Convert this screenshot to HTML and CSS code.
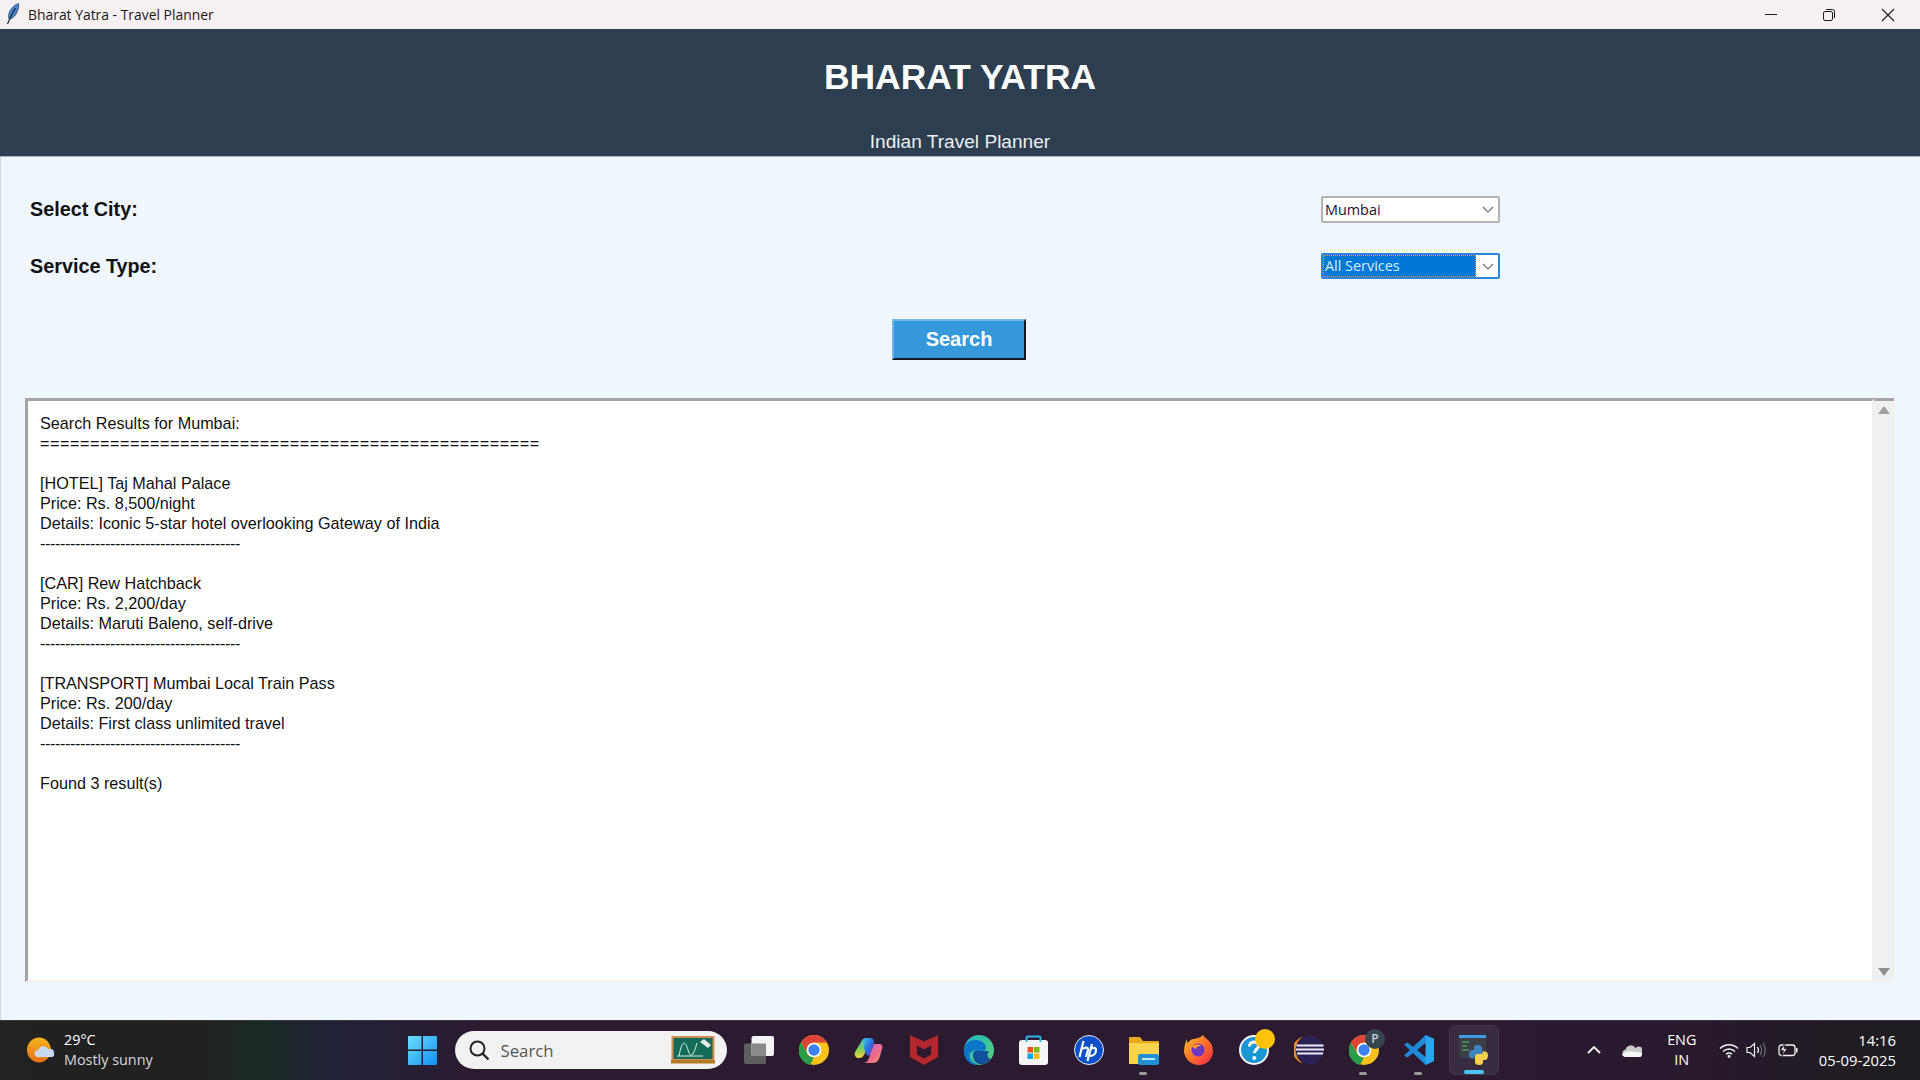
FILE: index.html
```html
<!DOCTYPE html>
<html lang="en">
<head>
<meta charset="utf-8">
<title>Bharat Yatra - Travel Planner</title>
<link rel="stylesheet" href="styles.css">
</head>
<body>
<div class="window">
  <div class="titlebar">
    <svg class="feather" width="14" height="22" viewBox="0 0 14 22"><path d="M12.500 .5C8 2 4 6 2.800 11c-.4 2-.2 4 .4 5.500C7 15.500 10 12 11.500 8c1-2.700 1.500-5 1-7.500z" fill="#4a86d0" stroke="#2a3a50" stroke-width=".7"/><path d="M9.500 5C7 9 4.500 14 1.500 21" fill="none" stroke="#1b2430" stroke-width="1.200"/></svg>
    <span class="title-text">Bharat Yatra - Travel Planner</span>
    <div class="controls">
      <div class="ctrl"><svg width="14" height="14" viewBox="0 0 14 14"><path d="M1 6.500h12" stroke="#1a1a1a" stroke-width="1"/></svg></div>
      <div class="ctrl"><svg width="14" height="14" viewBox="0 0 14 14"><rect x="1.500" y="3.500" width="9" height="9" rx="1.600" fill="none" stroke="#1a1a1a"/><path d="M4 1.500h6.500a2 2 0 0 1 2 2V10" fill="none" stroke="#1a1a1a"/></svg></div>
      <div class="ctrl"><svg width="14" height="14" viewBox="0 0 14 14"><path d="M1 1l12 12M13 1L1 13" stroke="#1a1a1a" stroke-width="1.100"/></svg></div>
    </div>
  </div>

  <header class="banner">
    <h1 class="brand">BHARAT YATRA</h1>
    <p class="tagline">Indian Travel Planner</p>
  </header>

  <main class="content">
    <div class="form">
      <label class="field-label">Select City:</label>
      <div class="combo">
        <span class="combo-value">Mumbai</span>
        <svg class="chev" width="12" height="7" viewBox="0 0 12 7"><path d="M1 1l5 5 5-5" fill="none" stroke="#707070" stroke-width="1.100"/></svg>
      </div>
      <label class="field-label">Service Type:</label>
      <div class="combo combo-focus">
        <span class="combo-value combo-selected">All Services</span>
        <svg class="chev" width="12" height="7" viewBox="0 0 12 7"><path d="M1 1l5 5 5-5" fill="none" stroke="#707070" stroke-width="1.100"/></svg>
      </div>
    </div>
    <div class="action"><button class="search-btn">Search</button></div>
    <section class="results-box">
<pre class="results">Search Results for Mumbai:
<span class="rule-eq">==================================================</span>

[HOTEL] Taj Mahal Palace
Price: Rs. 8,500/night
Details: Iconic 5-star hotel overlooking Gateway of India
<span class="rule-dash">----------------------------------------</span>

[CAR] Rew Hatchback
Price: Rs. 2,200/day
Details: Maruti Baleno, self-drive
<span class="rule-dash">----------------------------------------</span>

[TRANSPORT] Mumbai Local Train Pass
Price: Rs. 200/day
Details: First class unlimited travel
<span class="rule-dash">----------------------------------------</span>

Found 3 result(s)</pre>
      <div class="scrollbar">
        <svg width="12" height="8" viewBox="0 0 12 8"><path d="M6 0l6 8H0z" fill="#a0a0a0"/></svg>
        <svg width="12" height="8" viewBox="0 0 12 8"><path d="M6 8l6-8H0z" fill="#8f8f8f"/></svg>
      </div>
    </section>
  </main>

  <footer class="taskbar">
    <div class="weather">
      <svg width="28" height="26" viewBox="0 0 28 26"><defs><linearGradient id="sun" x1="0" y1="0" x2="0" y2="1"><stop offset="0" stop-color="#f3b51c"/><stop offset="1" stop-color="#e9701a"/></linearGradient></defs><ellipse cx="12" cy="13" rx="12" ry="12.500" fill="url(#sun)"/><path d="M11 20a3.500 3.500 0 0 1 .5-7 5 5 0 0 1 9.500-.5 3.800 3.800 0 0 1 6 3.700 3.200 3.200 0 0 1-1.500 3.800z" fill="#c6d8f5"/></svg>
      <div class="weather-text"><span class="temp">29°C</span><span class="cond">Mostly sunny</span></div>
    </div>
    <div class="task"><svg width="29" height="29" viewBox="0 0 29 29"><defs><linearGradient id="win" x1="0" y1="0" x2="1" y2="1"><stop offset="0" stop-color="#6ee0ff"/><stop offset="1" stop-color="#0f8ff0"/></linearGradient></defs><path d="M0 1a1 1 0 0 1 1-1h12.500v13.500H0zM15 0h13a1 1 0 0 1 1 1v12.500H15zM0 15h13.500v14H1a1 1 0 0 1-1-1zM15 15h14v13a1 1 0 0 1-1 1H15z" fill="url(#win)"/></svg></div>
    <div class="searchbox">
      <svg width="22" height="22" viewBox="0 0 22 22"><circle cx="9.500" cy="9.500" r="7" fill="none" stroke="#222" stroke-width="2"/><path d="M14.500 14.500l6 6" stroke="#222" stroke-width="2.400"/></svg>
      <span class="search-word">Search</span>
      <svg class="search-art" width="44" height="28" viewBox="0 0 44 28"><rect x="1.500" y="1" width="41" height="23" fill="#136b58" stroke="#d28e55" stroke-width="2"/><rect y="24" width="44" height="3.500" fill="#b07a22"/><path d="M6 20h26M8 20C11 4 14 4 17 14s6 4 9-7" fill="none" stroke="#d8efe6" stroke-width="1"/><path d="M29 6l4-3 7 6-3 3z" fill="#e8e8e8"/></svg>
    </div>
    <div class="task task-first"><svg width="30" height="28" viewBox="0 0 30 28"><rect y="7.500" width="22" height="20.500" rx="2" fill="#5e5e5e"/><rect x="7.500" y="0" width="22.500" height="20" rx="2" fill="#f4f4f4"/><rect x="7.500" y="7.500" width="14.500" height="12.500" fill="#8a8a8a"/></svg></div>
    <div class="task"><svg width="30" height="30" viewBox="0 0 30 30"><circle cx="15" cy="15" r="15" fill="#f9c11c"/><path d="M15 0A15 15 0 0 1 28 7.500H15a7.500 7.500 0 0 0-6.500 11.200L2 7.500A15 15 0 0 1 15 0z" fill="#dc4437"/><path d="M2 7.500l6.500 11.200A7.500 7.500 0 0 0 15 22.500L11 30A15 15 0 0 1 2 7.500z" fill="#2a9d4a"/><circle cx="15" cy="15" r="7.300" fill="#fff"/><circle cx="15" cy="15" r="5.700" fill="#3b82f0"/></svg></div>
    <div class="task"><svg width="29" height="27" viewBox="0 0 29 27"><defs><linearGradient id="cop1" x1="0" y1="0" x2="1" y2="1"><stop offset="0" stop-color="#36c0e8"/><stop offset=".5" stop-color="#2d6fe0"/><stop offset="1" stop-color="#6d3fd0"/></linearGradient><linearGradient id="cop2" x1="0" y1="0" x2="1" y2="1"><stop offset="0" stop-color="#b56bdc"/><stop offset=".6" stop-color="#ef6b8a"/><stop offset="1" stop-color="#f7a15a"/></linearGradient><linearGradient id="cop3" x1="0" y1="0" x2="0" y2="1"><stop offset="0" stop-color="#2fb8e0"/><stop offset=".6" stop-color="#8ccf52"/><stop offset="1" stop-color="#f7d23f"/></linearGradient></defs><path d="M7 5c1-3 3-4 5-4h3l-4 15c-1 3-3 5-6 5-3 0-5-2-4-6z" fill="url(#cop3)"/><path d="M11 1h5c3 0 4 2 4 4l-3 12c-1 2-4 2-5 0L10 11z" fill="url(#cop1)"/><path d="M20 7h5c3 0 4 2 3 5l-2 7c-1 4-3 7-7 7H9c3 0 5-2 6-5z" fill="url(#cop2)"/></svg></div>
    <div class="task"><svg width="28" height="30" viewBox="0 0 28 30"><path fill-rule="evenodd" d="M0 0l14 6.500L28 0v22l-14 8-14-8zM7 10.500v9l7 4 7-4v-9l-7 4z" fill="#b4282d"/></svg></div>
    <div class="task"><svg width="30" height="30" viewBox="0 0 30 30"><defs><linearGradient id="edge1" x1="0" y1="0" x2="1" y2="1"><stop offset="0" stop-color="#1fb5c9"/><stop offset="1" stop-color="#5bd36a"/></linearGradient></defs><circle cx="15" cy="15" r="15" fill="url(#edge1)"/><path d="M0 16C0 8 6 5 12 5c6 0 10 4 10 8 0 2-2 3-5 3-7-3-13 1-11 7 1 3 4 6 9 6.800C7 31 0 25 0 16z" fill="#0c77c8"/><path d="M9 20c0-4 3-6 7-4h9c-3 4-1 8 2 8-3 4-8 6-12 5-4-1-6-5-6-9z" fill="#134f9c"/></svg></div>
    <div class="task"><svg width="29" height="30" viewBox="0 0 29 30"><rect y="5" width="29" height="25" rx="3" fill="#f5f5f5"/><path d="M7.500 7V2.500a1 1 0 0 1 1-1h12a1 1 0 0 1 1 1V7" fill="none" stroke="#29b6e8" stroke-width="2"/><rect x="8.500" y="12" width="5.500" height="5.500" fill="#f25022"/><rect x="15" y="12" width="5.500" height="5.500" fill="#7fba00"/><rect x="8.500" y="18.500" width="5.500" height="5.500" fill="#00a4ef"/><rect x="15" y="18.500" width="5.500" height="5.500" fill="#ffb900"/></svg></div>
    <div class="task"><svg width="30" height="30" viewBox="0 0 30 30"><circle cx="15" cy="15" r="14.500" fill="#0b50c8" stroke="#e8eefc" stroke-width="1"/><path d="M9.500 6L5.500 22M9 14c2-2 5-2 5 .5L12 22M18 9l-4.500 17M16.500 14c2-1.500 5.500-2 5.500 1 0 3-2 6-6 6" fill="none" stroke="#fff" stroke-width="2.200"/></svg></div>
    <div class="task task-run"><svg width="30" height="30" viewBox="0 0 30 30"><path d="M0 3a1 1 0 0 1 1-1h10l3 4h15a1 1 0 0 1 1 1v22H0z" fill="#e9a91f"/><rect y="8" width="30" height="21" fill="#fbd44e"/><rect x="9" y="19" width="21" height="11" rx="2" fill="#1f8fd6"/><rect x="13" y="23" width="13" height="2" fill="#bfe6fb"/></svg></div>
    <div class="task"><svg width="29" height="30" viewBox="0 0 29 30"><defs><linearGradient id="ff" x1="0" y1="0" x2="1" y2="1"><stop offset="0" stop-color="#ffc12b"/><stop offset=".55" stop-color="#ff6a2b"/><stop offset="1" stop-color="#e8264f"/></linearGradient></defs><path d="M3 4c0 2 0 3 1 4 1-2 3-4 6-4 5-1 7-2 9-4 1 2 3 3 5 5 3 3 5 6 5 11 0 8-6 14-14 14S1 24 0 17C0 12 1 8 3 4z" fill="url(#ff)"/><circle cx="14" cy="15" r="6.500" fill="#6b36c4"/><path d="M8 12c3-3 7-3 9-1-3 0-5 1-5 3z" fill="#ff9d2b"/></svg></div>
    <div class="task task-badged">
      <svg width="30" height="30" viewBox="0 0 30 30"><circle cx="15" cy="15" r="14" fill="#1a96d5" stroke="#f2f8fc" stroke-width="2"/><path d="M10.500 11.500c0-3 2-4.500 4.500-4.500s4.500 1.500 4.500 4c0 3-4 3.500-4 7" fill="none" stroke="#fff" stroke-width="3"/><circle cx="15.300" cy="23" r="2" fill="#fff"/></svg>
      <span class="badge badge-dot"></span>
    </div>
    <div class="task"><svg width="30" height="30" viewBox="0 0 30 30"><circle cx="16" cy="15" r="14" fill="#2c2255"/><path d="M9 1.500A14 14 0 0 0 9 28.500 16 16 0 0 1 9 1.500z" fill="#f4901e"/><path d="M2.500 10.500h27M2 14.500h28M3 18.500h26" stroke="#efeaf7" stroke-width="2"/></svg></div>
    <div class="task task-run task-badged">
      <svg width="30" height="30" viewBox="0 0 30 30"><circle cx="15" cy="15" r="15" fill="#f9c11c"/><path d="M15 0A15 15 0 0 1 28 7.500H15a7.500 7.500 0 0 0-6.500 11.200L2 7.500A15 15 0 0 1 15 0z" fill="#dc4437"/><path d="M2 7.500l6.500 11.200A7.500 7.500 0 0 0 15 22.500L11 30A15 15 0 0 1 2 7.500z" fill="#2a9d4a"/><circle cx="15" cy="15" r="7.300" fill="#fff"/><circle cx="15" cy="15" r="5.700" fill="#3b82f0"/></svg>
      <span class="badge badge-p">P</span>
    </div>
    <div class="task task-run"><svg width="30" height="30" viewBox="0 0 30 30"><path d="M21.500 0L30 4v22l-8.500 4L9 18l-5.500 4.500L0 20.500 6 15 0 9.500 3.500 7.500 9 12z" fill="#1f8ad6"/><path d="M21.500 0L30 4v22l-8.500 4z" fill="#2aa6ee"/><path d="M21.500 8L13 15l8.500 7z" fill="#2a1a30"/></svg></div>
    <div class="task task-active">
      <svg width="30" height="30" viewBox="0 0 30 30"><rect x="0" y="0" width="27" height="23" fill="#3b4048"/><rect width="27" height="3" fill="#3f9be8"/><path d="M3 7h7M3 11h5M3 15h7" stroke="#5ec05e" stroke-width="1"/><path d="M19 10c-3 0-4 1-4 3v2h-1.500C11 15 10 17 10 19.500s1.200 4 3 4h2.500V21h5c1.500 0 2.500-1 2.500-2.500V13c0-2-1.500-3-4-3z" fill="#3f84bf"/><path d="M20 30c3 0 4-1 4-3v-2h1.500c2.500 0 3.500-2 3.500-4.500s-1.200-4-3-4h-2.500V19h-5c-1.500 0-2.500 1-2.500 2.500V27c0 2 1.500 3 4 3z" fill="#f5d24a"/></svg>
    </div>
    <div class="tray">
      <svg class="tray-chevron" width="14" height="8" viewBox="0 0 14 8"><path d="M1 7l6-6 6 6" fill="none" stroke="#f2f2f2" stroke-width="1.800"/></svg>
      <svg class="tray-cloud" width="20" height="13" viewBox="0 0 20 13"><path d="M4 13a3.800 3.800 0 0 1-.5-7.500A5.500 5.500 0 0 1 13.500 4 4.300 4.300 0 0 1 20 10c0 1.500-1 3-2 3z" fill="#c9c9c9"/><path d="M0 10.500c2-3 6-4 10-3 3 1 6 0 10 1.500 0 2-1 4-2 4H4c-2 0-3.500-1-4-2.500z" fill="#f5f5f5"/></svg>
      <div class="lang"><span>ENG</span><span>IN</span></div>
      <svg class="tray-wifi" width="20" height="15" viewBox="0 0 20 15"><path d="M1 5.500c5-5 13-5 18 0M4 8.500c3.500-3.300 8.500-3.300 12 0M7 11.200c1.800-1.500 4.200-1.500 6 0" fill="none" stroke="#f2f2f2" stroke-width="1.400"/><circle cx="10" cy="13.500" r="1.400" fill="#f2f2f2"/></svg>
      <svg class="tray-vol" width="20" height="16" viewBox="0 0 20 16"><path d="M1 5.500h3L8.500 1.500v13L4 10.500H1z" fill="none" stroke="#f2f2f2" stroke-width="1.200"/><path d="M11.500 5c1.200 1.800 1.200 4.200 0 6" fill="none" stroke="#f2f2f2" stroke-width="1.200"/><path d="M14 3c2 3 2 7 0 10M17 1c3 4 3 10 0 14" fill="none" stroke="#777" stroke-width="1.100"/></svg>
      <svg class="tray-batt" width="20" height="14" viewBox="0 0 20 14"><rect x="1" y="2" width="16" height="10.500" rx="2.500" fill="none" stroke="#f2f2f2" stroke-width="1.300"/><rect x="18" y="5" width="1.500" height="4.500" fill="#f2f2f2"/><path d="M7 0L2.500 7.500h3L4 13l5-7.500H6z" fill="#f2f2f2" stroke="#281a2c" stroke-width=".8"/></svg>
      <div class="clock"><span>14:16</span><span>05-09-2025</span></div>
    </div>
  </footer>
</div>
</body>
</html>
```
FILE: styles.css
```css
* { box-sizing: border-box; }
html, body { margin: 0; padding: 0; }
body { width: 1920px; height: 1080px; overflow: hidden; font-family: "Liberation Sans", Arial, sans-serif; }
.window { display: flex; flex-direction: column; height: 1080px; }

/* title bar */
.titlebar { flex: 0 0 29px; background: #f6f0f2; display: flex; align-items: center; padding-left: 6px; }
.feather { flex: none; margin-top: -1px; }
.title-text { margin-left: 8px; font-family: "Open Sans", sans-serif; font-size: 13.900px; color: #1a1a1a; }
.controls { margin-left: auto; display: flex; padding-right: 3px; }
.ctrl { width: 58.500px; height: 29px; display: flex; align-items: center; justify-content: center; }

/* banner */
.banner { flex: 0 0 128px; background: #2c3e50; border-bottom: 1px solid #a9b4bf; display: flex; flex-direction: column; align-items: center; }
.brand { margin: 28px 0 0; font-size: 35.400px; line-height: 40px; font-weight: 700; color: #fff; }
.tagline { margin: 33px 0 0; font-size: 19.100px; line-height: 24px; color: #ecf0f1; }

/* main */
.content { flex: 1; min-height: 0; background: #eff6fe; border-left: 1px solid #cfd6dd; display: flex; flex-direction: column; padding: 39px 26px 0 24px; }
.form { display: grid; grid-template-columns: 1291px 179px; grid-template-rows: 27px 26px; row-gap: 30px; padding-left: 5px; align-items: center; }
.field-label { font-size: 19.800px; font-weight: 700; color: #111; }
.combo { height: 100%; background: #fff; border: 2px solid #b3b3b3; border-radius: 2px; display: flex; align-items: center; justify-content: space-between; padding: 0 3px 0 0; }
.combo-focus { border-color: #2a86d8; }
.combo-value { font-family: "Open Sans", sans-serif; font-size: 14.400px; color: #1a1030; padding-left: 2px; line-height: 20px; }
.combo-selected { background: #0078d7; color: #d8ecff; flex: 0 0 153px; height: 22px; line-height: 22px; outline: 1px dotted #e09a4a; outline-offset: -1px; }
.chev { flex: none; margin-right: 1px; }
.action { display: flex; justify-content: center; margin-top: 40px; padding-right: 1px; }
.search-btn { width: 134px; height: 41px; background: #3498db; color: #fff; font-family: "Liberation Sans", sans-serif; font-size: 20px; font-weight: 700; padding: 0; border: 2px solid; border-color: #72b8ea #141a20 #141a20 #72b8ea; }

/* results */
.results-box { margin-top: 38px; height: 584px; display: flex; }
.results { flex: 1; margin: 0; padding: 12px 12px; background: #fff; border-style: solid; border-width: 3px 2px 2px 3px; border-color: #a3a3a3 #f0f0f0 #f0f0f0 #a3a3a3; font-family: "Liberation Sans", sans-serif; font-size: 16.200px; line-height: 20px; color: #111; }
.rule-eq { letter-spacing: .54px; }
.rule-dash { letter-spacing: -.39px; }
.scrollbar { flex: 0 0 20px; background: #f0f0f0; border-top: 3px solid #a3a3a3; display: flex; flex-direction: column; justify-content: space-between; align-items: center; padding: 5px 0 6px; }

/* taskbar */
.taskbar { flex: 0 0 60px; display: flex; align-items: center; color: #fff; font-family: "Open Sans", sans-serif; background: linear-gradient(90deg, #222 0, #211f20 180px, #1c2a25 260px, #22223a 340px, #2b1a30 480px, #2b1a30 1500px, #28192d 1700px, #201c22 1860px, #1f1d21 1920px); box-shadow: inset 0 1px 0 #3a3a3a; }
.weather { flex: 0 0 394.500px; display: flex; align-items: center; gap: 9px; padding-left: 27px; }
.weather-text { display: flex; flex-direction: column; line-height: 20px; font-size: 14.400px; }
.cond { color: #d8d8d8; }
.task { flex: 0 0 55px; height: 50px; display: flex; align-items: center; justify-content: center; position: relative; border-radius: 6px; }
.task-first { margin-left: 4.500px; }
.task-run::after { content: ""; position: absolute; left: 23px; bottom: 0; width: 8px; height: 3px; border-radius: 2px; background: #9a9a9a; }
.task-active { background: #3a2c40; border: 1px solid #44364a; flex-basis: 50px; margin: 0 2.500px; }
.task-active::after { content: ""; position: absolute; left: 14px; bottom: 0; width: 20px; height: 4px; border-radius: 2px; background: #4cc2ff; }
.badge { position: absolute; left: 29px; top: 4px; width: 20px; height: 20px; border-radius: 50%; }
.badge-dot { background: #ffc20a; }
.badge-p { background: #37474f; color: #c9d2d6; font-size: 12px; font-weight: 600; line-height: 20px; text-align: center; }
.searchbox { flex: 0 0 272px; margin-left: 5px; height: 38px; border-radius: 19px; background: #f2f2f2; display: flex; align-items: center; padding: 0 12px 0 13px; }
.search-word { margin-left: 11px; color: #555; font-size: 16.800px; }
.search-art { margin-left: auto; }
.tray { margin-left: auto; display: flex; align-items: center; padding-right: 24px; }
.tray-chevron { margin-right: 21px; }
.tray-cloud { margin-right: 21px; }
.lang { width: 38px; display: flex; flex-direction: column; align-items: center; font-size: 14.400px; line-height: 20px; margin-right: 18px; }
.tray-wifi { margin-right: 7px; }
.tray-vol { margin-right: 12px; }
.tray-batt { margin-right: 21px; }
.clock { display: flex; flex-direction: column; align-items: flex-end; font-size: 14.800px; line-height: 20px; }
```
